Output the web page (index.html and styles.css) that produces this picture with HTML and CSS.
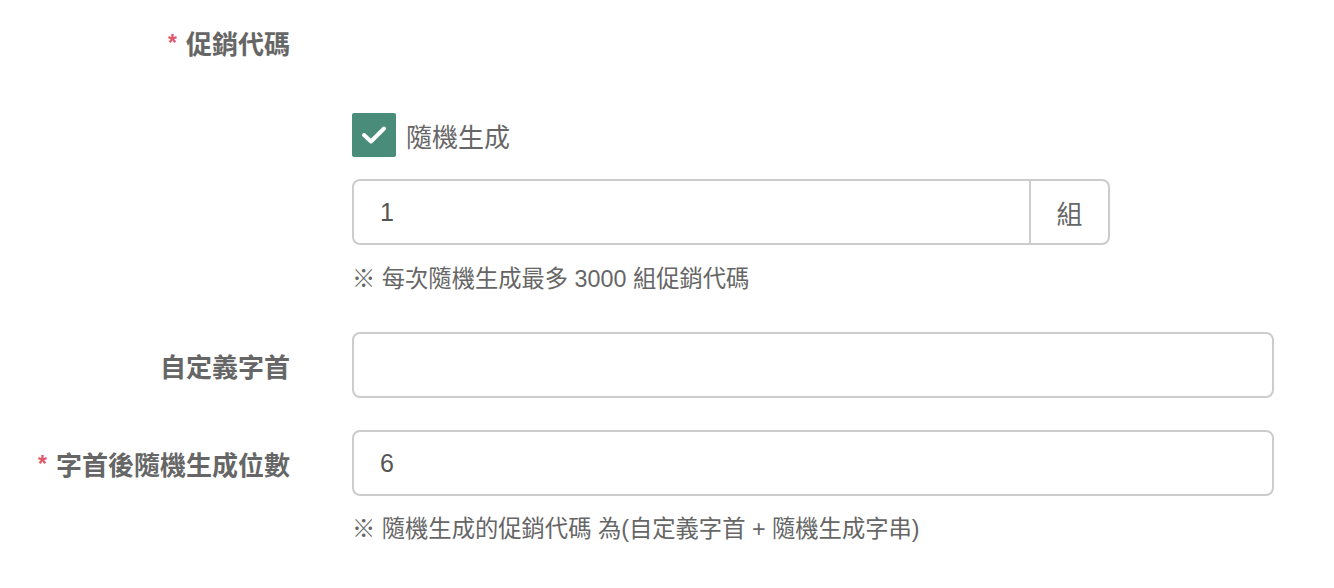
FILE: index.html
```html
<!DOCTYPE html>
<html lang="zh-Hant">
<head>
    <meta charset="UTF-8">
    <title>促銷代碼</title>
    <link rel="stylesheet" href="styles.css">
</head>
<body>
<form class="promo-form">
    <div class="form-row top">
        <label class="form-label"><span class="req">*</span>促銷代碼</label>
        <div class="form-control first">
            <label class="check">
                <span class="check-box">
                    <svg width="44" height="44" viewBox="0 0 44 44"><path d="M12 22 L19 28.5 L32 15.5" fill="none" stroke="#fff" stroke-width="4" stroke-linecap="round" stroke-linejoin="round"/></svg>
                </span>
                <span class="check-text">隨機生成</span>
            </label>
            <div class="input-group">
                <input type="text" value="1">
                <span class="addon">組</span>
            </div>
            <p class="help">※ 每次隨機生成最多 3000 組促銷代碼</p>
        </div>
    </div>
    <div class="form-row">
        <label class="form-label">自定義字首</label>
        <div class="form-control">
            <input type="text" class="wide">
        </div>
    </div>
    <div class="form-row last">
        <label class="form-label"><span class="req">*</span>字首後隨機生成位數</label>
        <div class="form-control">
            <input type="text" class="wide" value="6">
        </div>
    </div>
    <div class="form-row">
        <span></span>
        <p class="help note">※ 隨機生成的促銷代碼 為(自定義字首 + 隨機生成字串)</p>
    </div>
</form>
</body>
</html>
```
FILE: styles.css
```css
body {
    margin: 0;
    padding: 30px 0 0;
    background: #fff;
    font-family: "Liberation Sans", "Noto Sans CJK TC", sans-serif;
    color: #666;
}
.form-row {
    display: grid;
    grid-template-columns: 290px 922px;
    column-gap: 62px;
    align-items: center;
    margin-bottom: 32px;
}
.form-row.top {
    align-items: start;
    margin-bottom: 41px;
}
.form-row.last {
    margin-bottom: 21px;
}
.form-label {
    text-align: right;
    font-size: 26px;
    font-weight: bold;
    line-height: 30px;
    color: #666;
    padding-top: 6px;
}
.form-row.top .form-label {
    padding-top: 0;
}
.req {
    color: #e0566b;
    font-size: 23px;
    margin-right: 9px;
    position: relative;
    top: -3px;
}
.form-control.first {
    padding-top: 83px;
}
.check {
    display: flex;
    align-items: center;
    gap: 10px;
    height: 44px;
}
.check-box {
    width: 44px;
    height: 44px;
    background: #4a8c7a;
    border-radius: 2px;
}
.check-box svg {
    display: block;
}
.check-text {
    font-size: 26px;
}
.input-group {
    display: flex;
    width: 758px;
    margin-top: 22px;
    border: 2px solid #ccc;
    border-radius: 8px;
    box-sizing: border-box;
    height: 66px;
}
.input-group input {
    flex: 1;
    border: 0;
    border-right: 2px solid #ccc;
    border-radius: 8px 0 0 8px;
}
.addon {
    width: 77px;
    display: flex;
    align-items: center;
    justify-content: center;
    font-size: 26px;
}
input {
    font-family: inherit;
    font-size: 25px;
    color: #555;
    padding: 0 0 0 26px;
    outline: none;
    background: #fff;
}
input.wide {
    display: block;
    width: 100%;
    height: 66px;
    box-sizing: border-box;
    border: 2px solid #ccc;
    border-radius: 8px;
}
.help {
    margin: 22px 0 0;
    font-size: 23.3px;
    line-height: 24px;
    color: #666;
}
.help.note {
    margin-top: 0;
}
```
